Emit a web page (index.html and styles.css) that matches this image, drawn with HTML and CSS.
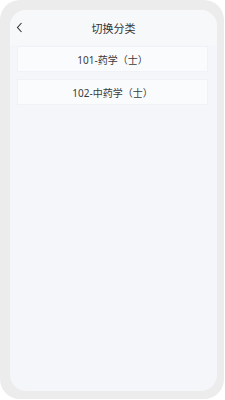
FILE: index.html
```html
<!DOCTYPE html>
<html lang="zh-CN">
<head>
    <meta charset="UTF-8">
    <meta name="viewport" content="width=device-width, initial-scale=1.0">
    <title>切换分类</title>
    <link rel="stylesheet" href="styles.css">
</head>
<body>

    <div class="frame">
        <div class="screen">
            <div class="header">
                <button class="btn-back" onclick="history.back()">
                    <svg width="7" height="11" viewBox="0 0 7 11">
                        <path d="M5.5 1 L1.5 5.5 L5.5 10" fill="none" stroke="#333" stroke-width="1.1"/>
                    </svg>
                </button>
                <h2>切换分类</h2>
            </div>

            <div class="list">
                <div class="item">101-药学（士）</div>
                <div class="item">102-中药学（士）</div>
            </div>
        </div>
    </div>

</body>
</html>
```

FILE: styles.css
```css
body {
    font-family: "Noto Sans", "Noto Sans CJK SC", sans-serif;
    background-color: #ffffff;
    margin: 0;
    padding: 0;
}

.frame {
    width: 224px;
    height: 399px;
    box-sizing: border-box;
    background-color: #ececec;
    border-radius: 20px;
    padding: 10px 7px 8px 10px;
    display: flex;
}

.screen {
    flex: 1;
    background-color: #f5f6fa;
    border-radius: 16px;
    display: flex;
    flex-direction: column;
    overflow: hidden;
}

.header {
    height: 35px;
    position: relative;
    display: flex;
    align-items: center;
    justify-content: center;
    background-color: #f7f8fa;
}

.header h2 {
    margin: 0;
    font-size: 11px;
    font-weight: normal;
    color: #333;
}

.btn-back {
    position: absolute;
    left: 6px;
    top: 12px;
    padding: 0;
    border: none;
    background: none;
    cursor: pointer;
    display: flex;
}

.list {
    display: flex;
    flex-direction: column;
    gap: 7px;
    padding: 1px 9px 0 7px;
}

.item {
    height: 26px;
    background-color: #fafbfc;
    border: 1px solid #f0f2f7;
    box-sizing: border-box;
    display: flex;
    align-items: center;
    justify-content: center;
    font-size: 10px;
    color: #3a3a3a;
}
```
